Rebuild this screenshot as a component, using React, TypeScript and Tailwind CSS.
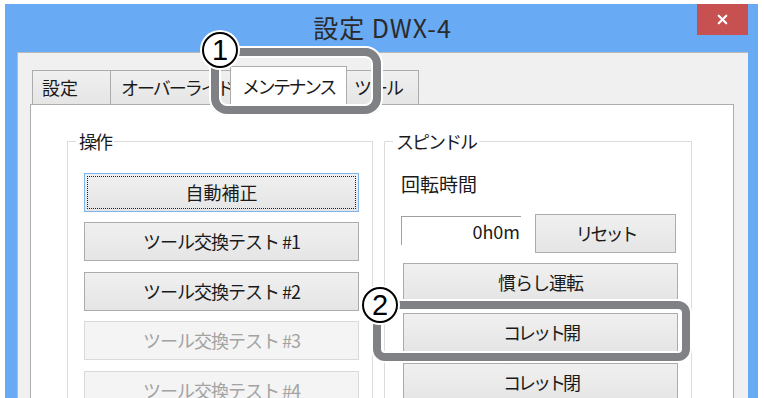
import { X } from "lucide-react";

const jp = "font-['Meiryo_UI','Noto_Sans_CJK_JP',sans-serif]";

const ops = [
  { label: "自動補正", state: "focus", gap: "" },
  { label: "ツール交換テスト #1", state: "normal", gap: "mt-[10px]" },
  { label: "ツール交換テスト #2", state: "normal", gap: "mt-[11px]" },
  { label: "ツール交換テスト #3", state: "disabled", gap: "mt-[10px]" },
  { label: "ツール交換テスト #4", state: "disabled", gap: "mt-[11px]" },
];

const spindle = [
  { label: "慣らし運転", gap: "mt-[10px]", track: "tracking-[-1px]" },
  { label: "コレット開", gap: "mt-[11px]", track: "tracking-[-3px]" },
  { label: "コレット閉", gap: "mt-[11px]", track: "tracking-[-3px]" },
];

function Button({
  label,
  state = "normal",
  className = "",
  track = "tracking-[-1px]",
}: {
  label: string;
  state?: string;
  className?: string;
  track?: string;
}) {
  if (state === "disabled") {
    return (
      <div className={`h-[39px] shrink-0 border border-[#d9d9d9] bg-[#f4f4f4] flex items-center justify-center text-[18px] ${track} text-[#a3a3a3] ${className}`}>
        {label}
      </div>
    );
  }
  if (state === "focus") {
    return (
      <div className={`h-[39px] shrink-0 border border-[#7eb4ea] bg-gradient-to-b from-[#f0f0f0] to-[#e5e5e5] p-[2px] ${className}`}>
        <div className="h-full border border-dotted border-[#222] flex items-center justify-center text-[18px] text-[#1a1a1a]">
          {label}
        </div>
      </div>
    );
  }
  return (
    <div className={`h-[39px] shrink-0 border border-[#acacac] bg-gradient-to-b from-[#f0f0f0] to-[#e5e5e5] flex items-center justify-center text-[18px] ${track} text-[#1a1a1a] ${className}`}>
      {label}
    </div>
  );
}

function Group({ title, className = "", children }: { title: string; className?: string; children: React.ReactNode }) {
  return (
    <div className={`relative border border-[#dcdcdc] flex flex-col ${className}`}>
      <span className="absolute top-[-12px] left-[8px] bg-white px-[3px] text-[18px] leading-[22px] tracking-[-2px] text-[#1a1a1a]">
        {title}
      </span>
      {children}
    </div>
  );
}

export default function App() {
  return (
    <div className={`relative w-[764px] h-[398px] overflow-hidden bg-white ${jp}`}>
      <div className="ml-[5px] mt-[4px] w-[753px] h-[394px] bg-[#69aaf4] flex flex-col pl-[12px] pr-[10px]">
        {/* title bar */}
        <div className="h-[48px] flex items-start shrink-0">
          <div className="w-[51px]" />
          <div className="flex-1 h-[48px] flex items-center justify-center text-[25px] tracking-[1px] text-[#2b2b2b] font-['Segoe_UI','Noto_Sans_CJK_JP',sans-serif]">
            設定 DWX-4
          </div>
          <div className="w-[51px] h-[31px] bg-[#c75050] flex items-center justify-center">
            <X size={15} strokeWidth={3.5} color="#ffffff" />
          </div>
        </div>

        {/* client */}
        <div className="flex-1 bg-[#f0f0f0] border-l border-t border-[#b9b9b9] pl-[12px] pr-[14px] pt-[12px] flex flex-col min-h-0">
          <div className="h-[39px] flex items-end pl-[2px] shrink-0">
            <div className="w-[79px] h-[34px] border border-b-0 border-[#acacac] bg-gradient-to-b from-[#f0f0f0] to-[#e5e5e5] pl-[9px] pt-[3px] text-[18px] text-[#1a1a1a]">
              設定
            </div>
            <div className="w-[128px] h-[34px] -ml-px border border-b-0 border-[#acacac] bg-gradient-to-b from-[#f0f0f0] to-[#e5e5e5] pl-[10px] pt-[3px] text-[18px] tracking-[-2px] text-[#1a1a1a] whitespace-nowrap">
              オーバーライド
            </div>
            <div className="relative w-[117px] h-[39px] -ml-[8px] -mb-px border border-b-0 border-[#acacac] bg-white pl-[11px] pt-[6px] text-[18px] tracking-[-2.5px] text-[#1a1a1a] whitespace-nowrap">
              メンテナンス
            </div>
            <div className="w-[73px] h-[34px] -ml-px border border-b-0 border-[#acacac] bg-gradient-to-b from-[#f0f0f0] to-[#e5e5e5] pl-[7px] pt-[3px] text-[18px] tracking-[-2px] text-[#1a1a1a] whitespace-nowrap">
              ツール
            </div>
          </div>

          <div className="flex-1 bg-white border border-[#adadad] pl-[36px] pt-[36px] flex items-start gap-[11px]">
            <Group title="操作" className="w-[306px] pl-[16px] pr-[13px] pt-[31px] h-[300px]">
              {ops.map((o) => (
                <Button key={o.label} label={o.label} state={o.state} className={o.gap} />
              ))}
            </Group>

            <Group title="スピンドル" className="w-[308px] pl-[16px] pr-[13px] pt-[30px] h-[300px]">
              <div className="text-[19px] leading-[24px] text-[#1a1a1a]">回転時間</div>
              <div className="mt-[18px] flex items-start">
                <div className="mt-[2px] w-[120px] h-[29px] border-l border-t border-[#a0a0a0] bg-white flex items-center justify-end pr-[1px] text-[18px] text-[#1a1a1a]">
                  0h0m
                </div>
                <Button label="リセット" track="tracking-[-3px]" className="ml-[14px] w-[141px]" />
              </div>
              {spindle.map((s) => (
                <Button key={s.label} label={s.label} track={s.track} className={`ml-[2px] ${s.gap}`} />
              ))}
            </Group>
          </div>
        </div>
      </div>

      {/* annotation 1 */}
      <div className="absolute left-[211px] top-[48px] w-[170px] h-[66px] rounded-[16px] border-[8px] border-[#808184] shadow-[0_0_0_2px_#ffffff,inset_0_0_0_2px_#ffffff]" />
      <div className="absolute left-[202px] top-[32px] w-[36px] h-[36px] rounded-full border-2 border-black bg-white shadow-[0_0_0_2px_#ffffff] flex items-center justify-center font-['Liberation_Sans',sans-serif] text-[29px] leading-none text-black">
        1
      </div>

      {/* annotation 2 */}
      <div className="absolute left-[373px] top-[301px] w-[317px] h-[60px] rounded-[12px] border-[8px] border-[#808184] shadow-[0_0_0_2px_#ffffff,inset_0_0_0_2px_#ffffff]" />
      <div className="absolute left-[362px] top-[287px] w-[36px] h-[36px] rounded-full border-2 border-black bg-white shadow-[0_0_0_2px_#ffffff] flex items-center justify-center font-['Liberation_Sans',sans-serif] text-[29px] leading-none text-black">
        2
      </div>
    </div>
  );
}
